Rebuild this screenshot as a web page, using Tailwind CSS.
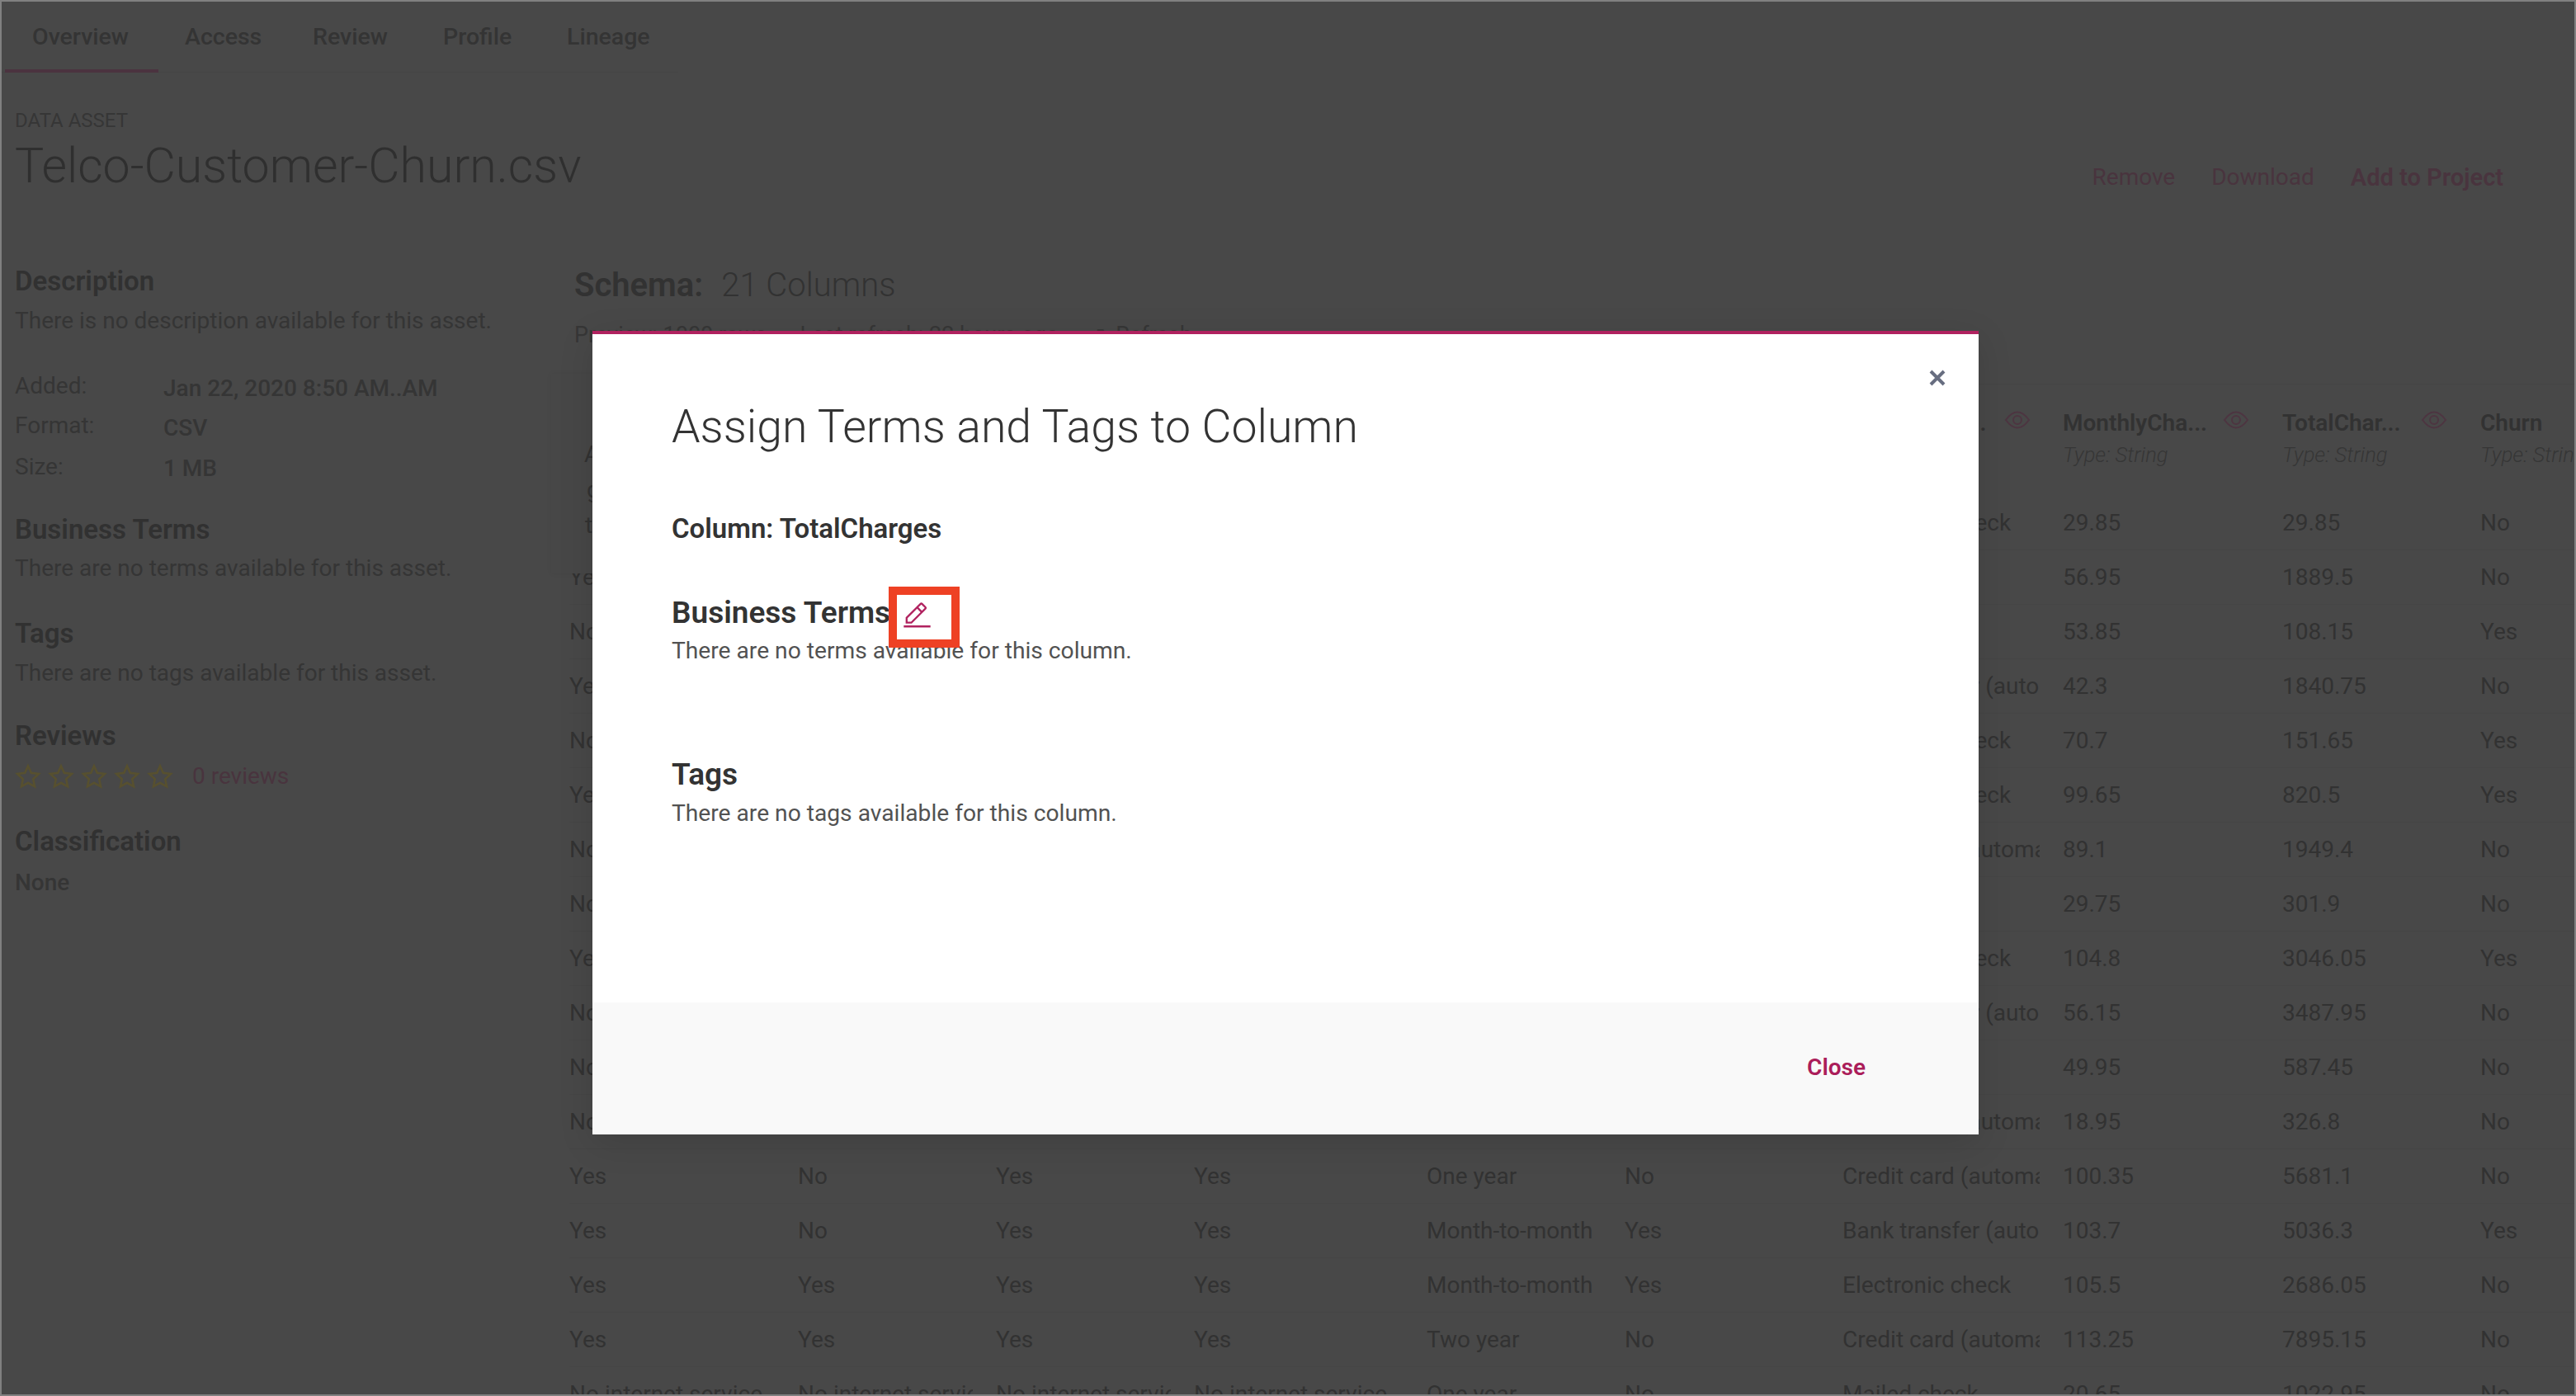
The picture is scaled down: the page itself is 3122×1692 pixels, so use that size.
<!DOCTYPE html>
<html lang="en">
<head>
<meta charset="utf-8">
<title>Telco-Customer-Churn.csv</title>
<script src="https://cdn.jsdelivr.net/npm/@tailwindcss/browser@4"></script>
</head>
<body class="m-0 bg-[#484848]">
<div class="relative box-border w-[3122px] h-[1692px] overflow-hidden border-2 border-[#808080] bg-[#484848] font-['Roboto',sans-serif] text-[#323232]">

  <!-- Tabs -->
  <nav class="flex h-[86px] w-[820px] border-b border-[#454545] text-[28.5px] font-medium text-[#343434]">
    <div class="ml-[4px] w-[186px] pl-[33px] pt-[22px] h-[86px] border-b-[4px] border-[#4b333f]">Overview</div>
    <div class="w-[155px] pl-[32px] pt-[22px]">Access</div>
    <div class="w-[158px] pl-[32px] pt-[22px]">Review</div>
    <div class="w-[150px] pl-[32px] pt-[22px]">Profile</div>
    <div class="pl-[32px] pt-[22px]">Lineage</div>
  </nav>

  <!-- Asset header -->
  <header class="mb-[40px] flex justify-between pl-[16px] pr-[86px]">
    <div>
      <div class="mt-[40px] h-[36px] text-[24px] leading-[36px] text-[#363636]">DATA ASSET</div>
      <h1 class="mt-[1px] h-[72px] text-[59px] leading-[72px] font-light text-[#2f2f2f]">Telco-Customer-Churn.csv</h1>
    </div>
    <div class="mt-[104px] flex items-center gap-[44px] text-[28px] leading-[40px] text-[#49343e]">
      <span>Remove</span><span>Download</span><span class="text-[29px] font-semibold">Add to Project</span>
    </div>
  </header>

  <div class="flex pl-[16px]">
    <!-- Sidebar -->
    <aside class="w-[678px] shrink-0 pt-[44px] text-[28px] text-[#353535]">
      <h2 class="h-[40px] text-[33px] leading-[40px] font-semibold text-[#313131]">Description</h2>
      <p class="mt-[8px] h-[40px] leading-[40px]">There is no description available for this asset.</p>
      <dl class="mt-[39px] grid grid-cols-[180px_1fr] font-medium">
        <dt class="h-[46px] leading-[40px] font-normal">Added:</dt><dd class="h-[46px] leading-[46px]">Jan 22, 2020 8:50 AM..AM</dd>
        <dt class="h-[49px] leading-[44px] font-normal">Format:</dt><dd class="h-[49px] leading-[50px]">CSV</dd>
        <dt class="h-[48px] leading-[46px] font-normal">Size:</dt><dd class="h-[48px] leading-[50px]">1 MB</dd>
      </dl>
      <h2 class="mt-[31px] h-[40px] text-[33px] leading-[40px] font-semibold text-[#313131]">Business Terms</h2>
      <p class="mt-[7px] h-[40px] leading-[40px]">There are no terms available for this asset.</p>
      <h2 class="mt-[39px] h-[40px] text-[33px] leading-[40px] font-semibold text-[#313131]">Tags</h2>
      <p class="mt-[8px] h-[40px] leading-[40px]">There are no tags available for this asset.</p>
      <h2 class="mt-[36px] h-[40px] text-[33px] leading-[40px] font-semibold text-[#313131]">Reviews</h2>
      <div class="mt-[9px] flex h-[40px] items-center">
        <div class="flex gap-[8px] text-[#57502f]">
          <svg class="size-[32px]" viewBox="0 0 32 32" fill="none" stroke="currentColor" stroke-width="2.6" aria-hidden="true"><path d="M16 3.5 19.8 11.9 28.9 13 22.2 19.2 24 28.3 16 23.8 8 28.3 9.8 19.2 3.1 13 12.2 11.9Z"/></svg>
          <svg class="size-[32px]" viewBox="0 0 32 32" fill="none" stroke="currentColor" stroke-width="2.6" aria-hidden="true"><path d="M16 3.5 19.8 11.9 28.9 13 22.2 19.2 24 28.3 16 23.8 8 28.3 9.8 19.2 3.1 13 12.2 11.9Z"/></svg>
          <svg class="size-[32px]" viewBox="0 0 32 32" fill="none" stroke="currentColor" stroke-width="2.6" aria-hidden="true"><path d="M16 3.5 19.8 11.9 28.9 13 22.2 19.2 24 28.3 16 23.8 8 28.3 9.8 19.2 3.1 13 12.2 11.9Z"/></svg>
          <svg class="size-[32px]" viewBox="0 0 32 32" fill="none" stroke="currentColor" stroke-width="2.6" aria-hidden="true"><path d="M16 3.5 19.8 11.9 28.9 13 22.2 19.2 24 28.3 16 23.8 8 28.3 9.8 19.2 3.1 13 12.2 11.9Z"/></svg>
          <svg class="size-[32px]" viewBox="0 0 32 32" fill="none" stroke="currentColor" stroke-width="2.6" aria-hidden="true"><path d="M16 3.5 19.8 11.9 28.9 13 22.2 19.2 24 28.3 16 23.8 8 28.3 9.8 19.2 3.1 13 12.2 11.9Z"/></svg>
        </div>
        <span class="ml-[23px] text-[#49343e]">0 reviews</span>
      </div>
      <h2 class="mt-[39px] h-[40px] text-[33px] leading-[40px] font-semibold text-[#313131]">Classification</h2>
      <p class="mt-[10px] h-[40px] leading-[40px] font-medium">None</p>
    </aside>

    <!-- Schema -->
    <section class="relative min-w-0 flex-1 pt-[44px]">
      <div class="h-[50px] text-[40px] leading-[50px]"><span class="font-semibold">Schema:</span><span class="ml-[22px] font-light">21 Columns</span></div>
      <div class="mt-[15px] flex h-[40px] text-[27px] leading-[40px] text-[#363636]"><span>Preview: 1000 rows</span><span class="ml-[40px]">Last refresh: 22 hours ago</span><span class="ml-[36px]">↗</span><span class="ml-[10px]">Refresh</span></div>

      <!-- Table head -->
      <div class="-ml-[6px] mt-[39px] grid h-[136px] grid-cols-[277px_240px_240px_282px_240px_264px_267px_266px_240px_1fr] border-t border-[#454545] text-[28px] *:overflow-hidden *:whitespace-nowrap *:mr-[28px]">
        <div class="pt-[14px]">–</div>
        <div></div><div></div><div></div><div></div><div></div>
        <div class="relative !overflow-visible pt-[26px]"><span class="block font-semibold">PaymentMe...</span><svg class="absolute left-[196px] top-[32px] h-[22px] w-[32px] text-[#4d3541]" viewBox="0 0 32 22" fill="none" stroke="currentColor" stroke-width="2" aria-hidden="true"><path d="M2 11C7 4 11 1.500 16 1.500S25 4 30 11C25 18 21 20.500 16 20.500S7 18 2 11Z"/><circle cx="16" cy="11" r="5"/></svg></div>
        <div class="relative !overflow-visible pt-[26px]"><div class="font-semibold">MonthlyCha...</div><div class="-mt-[2px] text-[25.5px] italic font-light text-[#363636]">Type: String</div><svg class="absolute left-[194px] top-[32px] h-[22px] w-[32px] text-[#4d3541]" viewBox="0 0 32 22" fill="none" stroke="currentColor" stroke-width="2" aria-hidden="true"><path d="M2 11C7 4 11 1.500 16 1.500S25 4 30 11C25 18 21 20.500 16 20.500S7 18 2 11Z"/><circle cx="16" cy="11" r="5"/></svg></div>
        <div class="relative !overflow-visible pt-[26px]"><div class="font-semibold">TotalChar...</div><div class="-mt-[2px] text-[25.5px] italic font-light text-[#363636]">Type: String</div><svg class="absolute left-[168px] top-[32px] h-[22px] w-[32px] text-[#4d3541]" viewBox="0 0 32 22" fill="none" stroke="currentColor" stroke-width="2" aria-hidden="true"><path d="M2 11C7 4 11 1.500 16 1.500S25 4 30 11C25 18 21 20.500 16 20.500S7 18 2 11Z"/><circle cx="16" cy="11" r="5"/></svg></div>
        <div class="!mr-0 pt-[26px]"><div class="font-semibold">Churn</div><div class="-mt-[2px] text-[25.5px] italic font-light text-[#363636]">Type: String</div></div>
      </div>

      <!-- Table rows -->
      <div class="-ml-[6px] text-[28px] leading-[66px] text-[#323232] [&>div]:grid [&>div]:h-[66px] [&>div]:grid-cols-[277px_240px_240px_282px_240px_264px_267px_266px_240px_1fr] [&>div]:border-b [&>div]:border-[#454545] [&>div>span]:overflow-hidden [&>div>span]:whitespace-nowrap [&>div>span]:mr-[28px]">
        <div><span>No</span><span>Yes</span><span>No</span><span>No</span><span>Month-to-month</span><span>Yes</span><span>Electronic check</span><span>29.85</span><span>29.85</span><span>No</span></div>
        <div><span>Yes</span><span>No</span><span>No</span><span>No</span><span>One year</span><span>No</span><span>Mailed check</span><span>56.95</span><span>1889.5</span><span>No</span></div>
        <div><span>No</span><span>No</span><span>No</span><span>No</span><span>Month-to-month</span><span>Yes</span><span>Mailed check</span><span>53.85</span><span>108.15</span><span>Yes</span></div>
        <div><span>Yes</span><span>Yes</span><span>No</span><span>No</span><span>One year</span><span>No</span><span>Bank transfer (automatic)</span><span>42.3</span><span>1840.75</span><span>No</span></div>
        <div><span>No</span><span>No</span><span>No</span><span>No</span><span>Month-to-month</span><span>Yes</span><span>Electronic check</span><span>70.7</span><span>151.65</span><span>Yes</span></div>
        <div><span>Yes</span><span>No</span><span>Yes</span><span>Yes</span><span>Month-to-month</span><span>Yes</span><span>Electronic check</span><span>99.65</span><span>820.5</span><span>Yes</span></div>
        <div><span>No</span><span>Yes</span><span>Yes</span><span>No</span><span>Month-to-month</span><span>Yes</span><span>Credit card (automatic)</span><span>89.1</span><span>1949.4</span><span>No</span></div>
        <div><span>No</span><span>No</span><span>No</span><span>No</span><span>Month-to-month</span><span>No</span><span>Mailed check</span><span>29.75</span><span>301.9</span><span>No</span></div>
        <div><span>Yes</span><span>Yes</span><span>Yes</span><span>Yes</span><span>Month-to-month</span><span>Yes</span><span>Electronic check</span><span>104.8</span><span>3046.05</span><span>Yes</span></div>
        <div><span>No</span><span>Yes</span><span>No</span><span>No</span><span>One year</span><span>No</span><span>Bank transfer (automatic)</span><span>56.15</span><span>3487.95</span><span>No</span></div>
        <div><span>No</span><span>No</span><span>No</span><span>No</span><span>Month-to-month</span><span>Yes</span><span>Mailed check</span><span>49.95</span><span>587.45</span><span>No</span></div>
        <div><span>No</span><span>No</span><span>No</span><span>No</span><span>Two year</span><span>Yes</span><span>Credit card (automatic)</span><span>18.95</span><span>326.8</span><span>No</span></div>
        <div><span>Yes</span><span>No</span><span>Yes</span><span>Yes</span><span>One year</span><span>No</span><span>Credit card (automatic)</span><span>100.35</span><span>5681.1</span><span>No</span></div>
        <div><span>Yes</span><span>No</span><span>Yes</span><span>Yes</span><span>Month-to-month</span><span>Yes</span><span>Bank transfer (automatic)</span><span>103.7</span><span>5036.3</span><span>Yes</span></div>
        <div><span>Yes</span><span>Yes</span><span>Yes</span><span>Yes</span><span>Month-to-month</span><span>Yes</span><span>Electronic check</span><span>105.5</span><span>2686.05</span><span>No</span></div>
        <div><span>Yes</span><span>Yes</span><span>Yes</span><span>Yes</span><span>Two year</span><span>No</span><span>Credit card (automatic)</span><span>113.25</span><span>7895.15</span><span>No</span></div>
        <div><span>No internet service</span><span>No internet service</span><span>No internet service</span><span>No internet service</span><span>One year</span><span>No</span><span>Mailed check</span><span>20.65</span><span>1022.95</span><span>No</span></div>
      </div>

      <!-- Popover behind the modal -->
      <div class="absolute left-[-28px] top-[176px] h-[242px] w-[420px] bg-[#474747] pl-[40px] pt-[76px] text-[28px] leading-[43px] text-[#323232] shadow-[0_0_6px_rgba(0,0,0,0.06)]">
        <div>Assign</div>
        <div class="pl-[3px]">glossary</div>
        <div class="pl-[1px]">terms</div>
      </div>
    </section>
  </div>

  <!-- Modal -->
  <div role="dialog" class="absolute left-[716px] top-[399px] flex h-[974px] w-[1680px] flex-col border-t-[4px] border-[#b0225f] bg-white shadow-[0_10px_40px_rgba(0,0,0,0.12)]">
    <svg class="absolute right-[40px] top-[43px] size-[20px] text-[#676d80]" viewBox="0 0 20 20" fill="none" stroke="currentColor" stroke-width="4" aria-label="Close"><path d="M2 2 18 18M18 2 2 18"/></svg>

    <div class="flex-1 pl-[96px] text-[#333333]">
      <h2 class="mt-[77px] h-[72px] text-[55.400px] leading-[72px] font-light">Assign Terms and Tags to Column</h2>
      <div class="mt-[67px] h-[40px] text-[33px] leading-[40px] font-semibold">Column: TotalCharges</div>
      <div class="mt-[58px] h-[48px] text-[37px] leading-[48px] font-semibold">Business Terms</div>
      <p class="mt-[2px] h-[40px] text-[28.200px] leading-[40px] text-[#525252]">There are no terms available for this column.</p>
      <div class="mt-[106px] h-[48px] text-[37px] leading-[48px] font-semibold">Tags</div>
      <p class="mt-[3px] h-[40px] text-[28.200px] leading-[40px] text-[#525252]">There are no tags available for this column.</p>
    </div>

    <footer class="flex h-[160px] items-center justify-end bg-[#f9f9f9] pb-[2px] pr-[137px] text-[28px] font-semibold text-[#ab1d5a]">Close</footer>

    <!-- Annotation -->
    <div class="absolute left-[359px] top-[306px] box-border h-[74px] w-[86px] border-[10px] border-[#ee4124] bg-white pl-[6px] pt-[7px]">
      <svg class="size-[37px] text-[#b0225f]" viewBox="0 0 32 32" fill="currentColor" aria-hidden="true"><path d="M2 26H30V28H2zM25.400 9c.8-.8.8-2 0-2.800l-3.600-3.600c-.8-.8-2-.8-2.800 0l-15 15V24h6.400L25.400 9zM20.400 4L24 7.600l-3 3L17.400 7 20.400 4zM6 22v-3.600l10-10 3.600 3.600-10 10H6z"/></svg>
    </div>
  </div>
</div>
</body>
</html>
